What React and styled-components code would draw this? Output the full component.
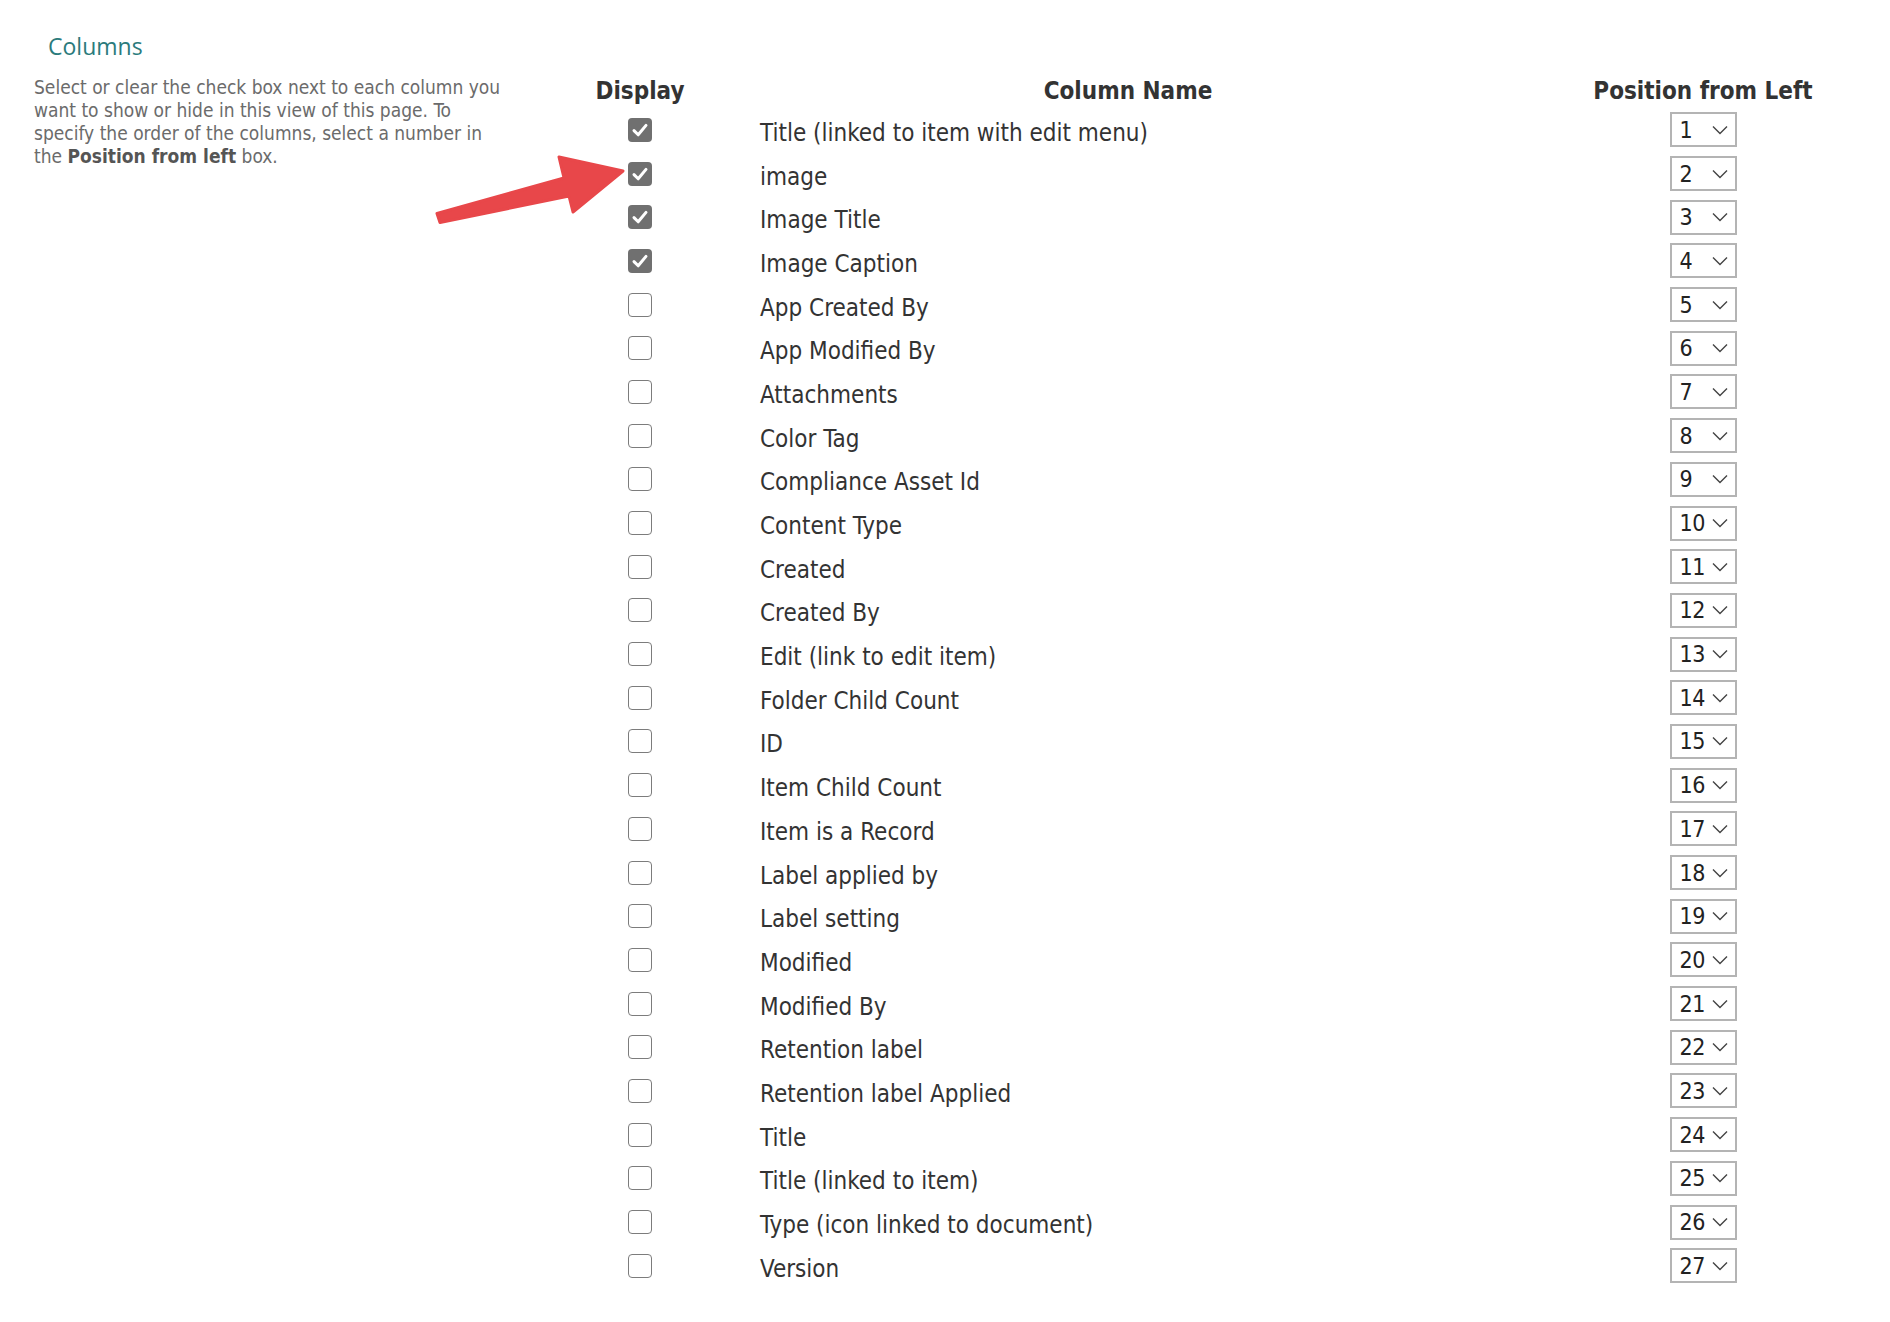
import React from "react";
import styled, { createGlobalStyle } from "styled-components";

const GlobalStyle = createGlobalStyle`
  html, body { margin: 0; padding: 0; background: #ffffff; }
  body {
    font-family: "DejaVu Sans Condensed", "DejaVu Sans", Verdana, sans-serif;
    font-stretch: condensed;
    color: #333333;
  }
`;

const Page = styled.div`
  position: relative;
  width: 1890px;
  min-height: 1322px;
  display: flex;
  align-items: flex-start;
`;

const Side = styled.div`
  width: 575px;
  flex: none;
  box-sizing: border-box;
  padding: 31px 0 0 34px;
`;

const SectionTitle = styled.h2`
  margin: 0 0 0 14px;
  font-family: "Open Sans", "Noto Sans", sans-serif;
  font-stretch: normal;
  font-weight: 400;
  font-size: 23px;
  line-height: 30px;
  color: #2b7b7c;
`;

const Description = styled.p`
  margin: 15px 0 0 0;
  width: 480px;
  font-size: 19px;
  line-height: 23px;
  color: #6b6b6b;
  b { color: #555555; font-weight: 700; }
`;

const Table = styled.div`
  display: flex;
  flex-direction: column;
  padding-top: 73px;
`;

const Row = styled.div`
  display: grid;
  grid-template-columns: 130px 846px 304px;
  align-items: center;
  height: ${(p) => (p.$header ? "35px" : "43.7px")};
`;

const HeadCell = styled.div`
  text-align: center;
  font-weight: 700;
  font-size: 24px;
  color: #333333;
`;

const Cell = styled.div`
  display: flex;
  align-items: center;
  justify-content: ${(p) => (p.$center ? "center" : "flex-start")};
  padding-left: ${(p) => (p.$indent ? "55px" : "0")};
  padding-top: ${(p) => (p.$indent ? "6px" : "0")};
`;

const Name = styled.span`
  font-size: 24px;
  color: #333333;
  white-space: nowrap;
`;

const Box = styled.span`
  box-sizing: border-box;
  width: 24px;
  height: 24px;
  border-radius: 4px;
  display: inline-flex;
  align-items: center;
  justify-content: center;
  background: ${(p) => (p.$checked ? "#707070" : "#ffffff")};
  border: ${(p) => (p.$checked ? "none" : "1.6px solid #7c7c7c")};
`;

const SelectBox = styled.div`
  box-sizing: border-box;
  width: 67px;
  height: 35px;
  border: 2px solid #b4b4b4;
  display: flex;
  align-items: center;
  justify-content: space-between;
  padding: 0 7px 0 8px;
  background: #ffffff;
`;

const SelectValue = styled.span`
  font-size: 23px;
  letter-spacing: -0.5px;
  color: #222222;
`;

const Arrow = styled.svg`
  position: absolute;
  left: 0;
  top: 0;
  pointer-events: none;
`;

const Check = () => (
  <svg width="24" height="24" viewBox="0 0 24 24">
    <path d="M6 12.6 L10.2 16.8 L18 7.4" fill="none" stroke="#ffffff" strokeWidth="3" strokeLinecap="round" strokeLinejoin="round" />
  </svg>
);

const Chevron = () => (
  <svg width="16" height="10" viewBox="0 0 16 10">
    <path d="M1 1.5 L8 8.5 L15 1.5" fill="none" stroke="#444444" strokeWidth="1.4" />
  </svg>
);

const columns = [
  "Title (linked to item with edit menu)",
  "image",
  "Image Title",
  "Image Caption",
  "App Created By",
  "App Modified By",
  "Attachments",
  "Color Tag",
  "Compliance Asset Id",
  "Content Type",
  "Created",
  "Created By",
  "Edit (link to edit item)",
  "Folder Child Count",
  "ID",
  "Item Child Count",
  "Item is a Record",
  "Label applied by",
  "Label setting",
  "Modified",
  "Modified By",
  "Retention label",
  "Retention label Applied",
  "Title",
  "Title (linked to item)",
  "Type (icon linked to document)",
  "Version",
];

export default function App() {
  return (
    <>
      <GlobalStyle />
      <Page>
        <Side>
          <SectionTitle>Columns</SectionTitle>
          <Description>
            Select or clear the check box next to each column you want to show or hide in this view of this page. To
            specify the order of the columns, select a number in the <b>Position from left</b> box.
          </Description>
        </Side>
        <Table>
          <Row $header>
            <HeadCell>Display</HeadCell>
            <HeadCell>Column Name</HeadCell>
            <HeadCell>Position from Left</HeadCell>
          </Row>
          {columns.map((name, i) => (
            <Row key={name + i}>
              <Cell $center>
                <Box $checked={i < 4}>{i < 4 && <Check />}</Box>
              </Cell>
              <Cell $indent>
                <Name>{name}</Name>
              </Cell>
              <Cell $center>
                <SelectBox>
                  <SelectValue>{i + 1}</SelectValue>
                  <Chevron />
                </SelectBox>
              </Cell>
            </Row>
          ))}
        </Table>
        <Arrow width="1890" height="1322" viewBox="0 0 1890 1322">
          <path
            d="M437 213.5 L564 178 L559 157 L623 171 L573 212 L569 196 L440 222.5 Z"
            fill="#e8474a"
            stroke="#e8474a"
            strokeWidth="3"
            strokeLinejoin="round"
          />
        </Arrow>
      </Page>
    </>
  );
}
